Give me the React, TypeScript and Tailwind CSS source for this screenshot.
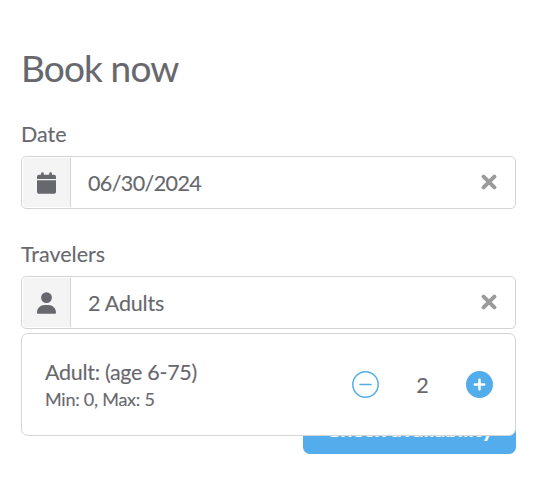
import { useState } from 'react';
import type { ReactNode } from 'react';
import { FaCalendar, FaUser, FaCirclePlus } from 'react-icons/fa6';

type FieldProps = {
  label: string;
  icon: ReactNode;
  value: string;
  valueClass: string;
  onClear: () => void;
};

function Field({ label, icon, value, valueClass, onClear }: FieldProps) {
  return (
    <div>
      <div className="mb-[9px] text-[21.5px] leading-[26px]">{label}</div>
      <div className="flex h-[53px] items-center rounded-[5px] border border-[#d3d4d7] bg-white p-px">
        <div className="flex h-full w-12 shrink-0 items-center justify-center rounded-l-[3px] border-r border-[#d3d4d7] bg-[#f4f4f4]">
          {icon}
        </div>
        <span className={`flex-1 pl-[17px] text-[21.5px] leading-[26px] ${valueClass}`}>{value}</span>
        <button type="button" aria-label="Clear" onClick={onClear} className="mr-[17px] cursor-pointer pb-[2px] text-[#9b9b9b]">
          <svg viewBox="0 0 16 16" className="size-4" fill="none" stroke="currentColor" strokeWidth="4" strokeLinecap="round">
            <path d="M2.6 2.6l10.8 10.8M13.4 2.6L2.6 13.4" />
          </svg>
        </button>
      </div>
    </div>
  );
}

export default function App() {
  const [date, setDate] = useState('06/30/2024');
  const [adults, setAdults] = useState(2);

  return (
    <div className="h-[484px] w-[546px] overflow-hidden bg-white px-[21px] pt-[45px] font-['Lato',sans-serif] text-[#67686e] [-webkit-text-stroke:0.12px]">
      <h1 className="mb-[30px] h-[46px] text-[37px] leading-[46px] tracking-[-0.85px]">Book now</h1>

      <div className="relative flex w-[495px] flex-col gap-8">
        <Field
          label="Date"
          icon={<FaCalendar className="h-[22px] w-[19px]" />}
          value={date}
          valueClass="tracking-[-0.6px]"
          onClear={() => setDate('')}
        />
        <Field
          label="Travelers"
          icon={<FaUser className="h-[22px] w-[19px]" />}
          value={adults > 0 ? `${adults} Adults` : ''}
          valueClass="tracking-[-0.2px]"
          onClear={() => setAdults(0)}
        />

        <div className="absolute top-[212px] left-0 z-10 flex h-[103px] w-full items-center justify-between rounded-[7px] border border-[#d3d4d7] bg-white px-[22px]">
          <div className="pt-[2px] pl-px">
            <div className="text-[21.5px] leading-[27px] tracking-[-0.3px]">Adult: (age 6-75)</div>
            <div className="text-[18px] leading-[26px] tracking-[-0.25px]">Min: 0, Max: 5</div>
          </div>
          <div className="flex items-center">
            <button
              type="button"
              aria-label="Remove adult"
              onClick={() => setAdults(Math.max(0, adults - 1))}
              className="cursor-pointer text-[#53adec]"
            >
              <svg viewBox="0 0 27 27" className="size-[27px]" fill="none" stroke="currentColor" strokeWidth="1.5">
                <circle cx="13.5" cy="13.5" r="12.7" />
                <path d="M8 13.5h11" strokeLinecap="round" />
              </svg>
            </button>
            <span className="w-[87px] text-center text-[21.5px] leading-[26px]">{adults}</span>
            <button
              type="button"
              aria-label="Add adult"
              onClick={() => setAdults(Math.min(5, adults + 1))}
              className="cursor-pointer text-[#53adec]"
            >
              <FaCirclePlus className="size-[27px]" />
            </button>
          </div>
        </div>
      </div>

      <div className="mt-[72px] flex w-[495px] justify-end">
        <button type="button" className="h-[53px] w-[213px] cursor-pointer rounded-[7px] bg-[#53adec] pt-1 text-[21.5px] font-bold text-white">
          Check availability
        </button>
      </div>
    </div>
  );
}
